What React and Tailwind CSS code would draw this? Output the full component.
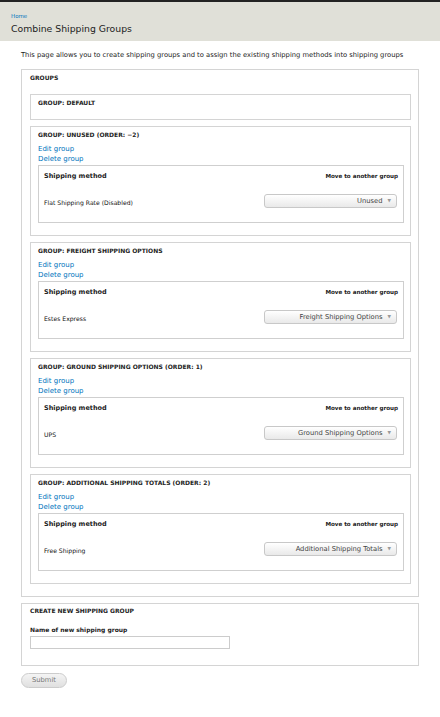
const groups = [
  { title: 'GROUP: UNUSED (ORDER: −2)', method: 'Flat Shipping Rate (Disabled)', value: 'Unused' },
  { title: 'GROUP: FREIGHT SHIPPING OPTIONS', method: 'Estes Express', value: 'Freight Shipping Options' },
  { title: 'GROUP: GROUND SHIPPING OPTIONS (ORDER: 1)', method: 'UPS', value: 'Ground Shipping Options' },
  { title: 'GROUP: ADDITIONAL SHIPPING TOTALS (ORDER: 2)', method: 'Free Shipping', value: 'Additional Shipping Totals' },
]

function GroupBox({ group }) {
  return (
    <div className="h-[110px] border border-[#d4d4d4] pl-[7px] pr-[6px] pt-[4px]">
      <div className="font-bold text-[6px] leading-[8px] text-[#222]">{group.title}</div>
      <div className="mt-[5px] text-[#0074bd] leading-[10px]">Edit group</div>
      <div className="text-[#0074bd] leading-[10px]">Delete group</div>
      <div className="mt-[1px] border border-[#cfcfcf] h-[58px] pl-[5px] pr-[5px] pt-[6px]">
        <div className="flex justify-between items-center font-bold leading-[8px] text-[#222]">
          <span className="text-[6.5px]">Shipping method</span>
          <span className="text-[5.6px]">Move to another group</span>
        </div>
        <div className="flex justify-between items-start mt-[14px]">
          <span className="mt-[5px] text-[6.1px] leading-[8px] text-[#111]">{group.method}</span>
          <div className="w-[133px] h-[14px] border border-[#c8c8c8] rounded-[3px] bg-gradient-to-b from-white to-[#e9e9e9] flex items-center justify-end pr-[5px] gap-[5px] text-[6.75px] text-[#444] mr-[1px]">
            <span>{group.value}</span>
            <span className="text-[4.5px] text-[#999]">▼</span>
          </div>
        </div>
      </div>
    </div>
  )
}

export default function App() {
  return (
    <div className="min-h-[717px] bg-white text-[7px] text-[#333]" style={{ fontFamily: '"DejaVu Sans", Verdana, sans-serif' }}>
      <div className="bg-[#e0e0d8] border-t-[2px] border-[#222] h-[41px] px-[11px] pt-[11px]">
        <div className="text-[5.5px] leading-[7px] text-[#0074bd]">Home</div>
        <h1 className="text-[9.3px] leading-[14px] mt-[2px] text-[#222]">Combine Shipping Groups</h1>
      </div>
      <div className="px-[21px]">
        <p className="mt-[10px] leading-[9px] text-[6.75px] text-[#222]">This page allows you to create shipping groups and to assign the existing shipping methods into shipping groups</p>
        <div className="mt-[9px] border border-[#d4d4d4] pl-[8px] pr-[7px] pt-[4px] pb-[12px]">
          <div className="font-bold text-[6px] leading-[8px] text-[#222]">GROUPS</div>
          <div className="mt-[12px] border border-[#d4d4d4] h-[26px] px-[7px] pt-[4px]">
            <div className="font-bold text-[6px] leading-[8px] text-[#222]">GROUP: DEFAULT</div>
          </div>
          <div className="mt-[6px] flex flex-col gap-[6px]">
            {groups.map(g => <GroupBox key={g.title} group={g} />)}
          </div>
        </div>
        <div className="mt-[6px] border border-[#d4d4d4] h-[63px] px-[8px] pt-[3px]">
          <div className="font-bold text-[6px] leading-[8px] text-[#222]">CREATE NEW SHIPPING GROUP</div>
          <div className="mt-[11px] font-bold text-[6px] leading-[8px] text-[#222]">Name of new shipping group</div>
          <div className="mt-[2px] w-[200px] h-[13px] border border-[#ccc] bg-white"></div>
        </div>
        <button className="mt-[7px] w-[46px] h-[15px] rounded-full border border-[#ccc] bg-gradient-to-b from-[#f4f4f4] to-[#e0e0e0] text-[6.75px] text-[#777]">Submit</button>
      </div>
    </div>
  )
}
